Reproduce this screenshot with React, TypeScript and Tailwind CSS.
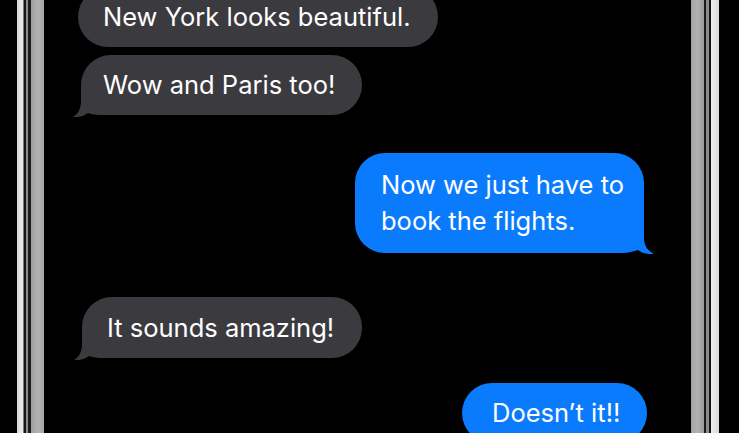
import React from "react";

const GRAY = "#3b3a3f";
const BLUE = "#0b7bfe";

function TailLeft({ color }: { color: string }) {
  return (
    <svg
      className="absolute left-[-8px] bottom-[-2px]"
      width="40"
      height="32"
      viewBox="0 0 40 32"
    >
      <path
        d="M8 0 L8 16 C8 24 5 29 0 32 C6 32.5 11 31 15 28 C19 29.5 24 30 30 30 L40 30 L40 0 Z"
        fill={color}
      />
    </svg>
  );
}

function TailRight({ color }: { color: string }) {
  return (
    <svg
      className="absolute right-[-10px] bottom-[-1px]"
      width="42"
      height="32"
      viewBox="0 0 42 32"
    >
      <path
        d="M32 0 L32 16 C32 24 36 29 42 32 C35 32.5 30 31 26 28 C22 29.5 16 31 10 31 L0 31 L0 0 Z"
        fill={color}
      />
    </svg>
  );
}

export default function App() {
  return (
    <div
      className="w-[739px] h-[433px] bg-black overflow-hidden flex text-white"
      style={{ fontFamily: "Inter, 'Noto Sans', 'Liberation Sans', sans-serif" }}
    >
      {/* left outer black */}
      <div className="w-[17px] shrink-0" />
      {/* left bezel */}
      <div className="flex shrink-0 h-full">
        <div className="w-[6px] bg-gradient-to-r from-[#d8d8da] to-[#ececee]" />
        <div className="w-[1px] bg-[#7a7a7a]" />
        <div className="w-[2px] bg-[#141414]" />
        <div className="w-[2px] bg-[#8c8c8c]" />
        <div className="w-[3px] bg-[#1c1c1c]" />
        <div className="w-[13px] bg-gradient-to-r from-[#9c9c9c] via-[#b2b2b2] to-[#a4a4a4]" />
      </div>

      {/* screen content */}
      <div className="w-[647px] shrink-0 flex flex-col text-[25.5px] leading-[36px]">
        {/* bubble 1 */}
        <div
          className="mt-[-13px] ml-[34px] w-[360px] h-[60px] rounded-[30px] flex items-center pl-[25px] whitespace-nowrap shrink-0"
          style={{ backgroundColor: GRAY }}
        >
          New York looks beautiful.
        </div>
        {/* bubble 2 */}
        <div
          className="relative mt-[8px] ml-[37px] w-[281px] h-[60px] rounded-[30px] flex items-center pl-[22px] whitespace-nowrap shrink-0"
          style={{ backgroundColor: GRAY }}
        >
          <TailLeft color={GRAY} />
          <span className="relative">Wow and Paris too!</span>
        </div>
        {/* blue 1 */}
        <div
          className="relative mt-[38px] self-end mr-[47px] w-[289px] h-[100px] rounded-[30px] flex items-center pl-[26px] shrink-0"
          style={{ backgroundColor: BLUE }}
        >
          <TailRight color={BLUE} />
          <span className="relative whitespace-nowrap">
            Now we just have to
            <br />
            book the flights.
          </span>
        </div>
        {/* bubble 4 */}
        <div
          className="relative mt-[44px] ml-[38px] w-[280px] h-[61px] rounded-[30px] flex items-center pl-[25px] whitespace-nowrap shrink-0"
          style={{ backgroundColor: GRAY }}
        >
          <TailLeft color={GRAY} />
          <span className="relative">It sounds amazing!</span>
        </div>
        {/* blue 2 */}
        <div
          className="mt-[25px] self-end mr-[44px] w-[185px] h-[60px] rounded-[30px] flex items-center pl-[30px] whitespace-nowrap shrink-0"
          style={{ backgroundColor: BLUE }}
        >
          Doesn’t it!!
        </div>
      </div>

      {/* right bezel */}
      <div className="flex shrink-0 h-full">
        <div className="w-[13px] bg-gradient-to-r from-[#a4a4a4] via-[#b2b2b2] to-[#9c9c9c]" />
        <div className="w-[2px] bg-[#1c1c1c]" />
        <div className="w-[3px] bg-[#8c8c8c]" />
        <div className="w-[2px] bg-[#141414]" />
        <div className="w-[8px] bg-gradient-to-r from-[#ececee] to-[#d8d8da]" />
      </div>
    </div>
  );
}
